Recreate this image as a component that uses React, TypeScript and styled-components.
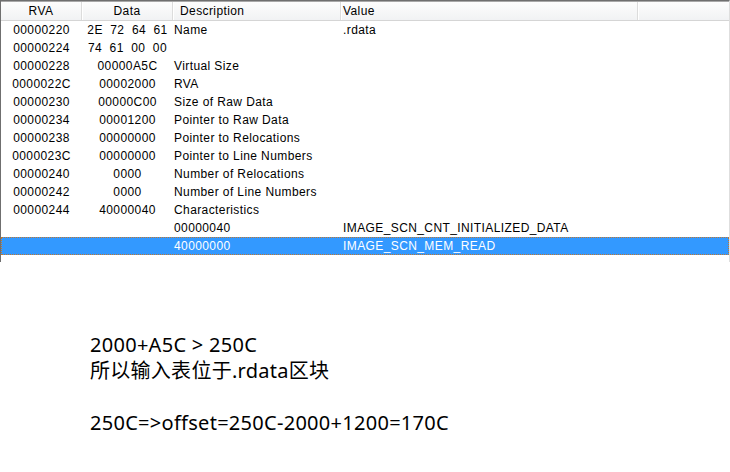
import React from "react";
import styled, { createGlobalStyle } from "styled-components";

const Global = createGlobalStyle`
  html, body { margin: 0; padding: 0; background: #ffffff; }
  body { width: 730px; height: 472px; overflow: hidden; }
`;

const COLS = "81px 91px 168px 297px 1fr";

const Page = styled.div`
  display: flex;
  flex-direction: column;
  width: 730px;
  height: 472px;
  background: #ffffff;
`;

const ListView = styled.div`
  height: 262px;
  box-sizing: border-box;
  border-top: 1px solid #6f6f6f;
  border-left: 1px solid #6f6f6f;
  border-right: 1px solid #dedede;
  display: flex;
  flex-direction: column;
  font-family: "Liberation Sans", Arial, sans-serif;
  font-size: 12px;
  letter-spacing: 0.4px;
  color: #000;
`;

const Header = styled.div`
  display: grid;
  grid-template-columns: ${COLS};
  height: 18px;
  background: linear-gradient(#fdfdfd, #f1f2f4);
  border-top: 1px solid #a8a8a8;
  border-bottom: 1px solid #d5d5d5;
`;

const HeadCell = styled.div<{ $align?: "center" | "left"; $pad?: number; $last?: boolean }>`
  display: flex;
  align-items: center;
  justify-content: ${(p) => (p.$align === "left" ? "flex-start" : "center")};
  padding-left: ${(p) => p.$pad ?? 0}px;
  border-right: ${(p) => (p.$last ? "none" : "1px solid #dcdcdc")};
  box-shadow: ${(p) => (p.$last ? "none" : "1px 0 0 #ffffff")};
  color: #000;
  white-space: nowrap;
  overflow: hidden;
`;

const Body = styled.div`
  display: flex;
  flex-direction: column;
`;

const Row = styled.div<{ $selected?: boolean }>`
  display: grid;
  grid-template-columns: ${COLS};
  height: 18px;
  background: ${(p) => (p.$selected ? "#3399ff" : "transparent")};
  color: ${(p) => (p.$selected ? "#ffffff" : "#000000")};
  outline: ${(p) => (p.$selected ? "1px dotted #c2772e" : "none")};
  outline-offset: -1px;
`;

const Cell = styled.div<{ $align?: "center" | "left"; $pad?: number }>`
  display: flex;
  align-items: center;
  justify-content: ${(p) => (p.$align === "left" ? "flex-start" : "center")};
  padding-left: ${(p) => p.$pad ?? 0}px;
  white-space: pre;
  overflow: hidden;
`;

const Notes = styled.div`
  margin-top: 70px;
  padding-left: 90px;
  font-family: "Noto Sans", "Noto Sans CJK SC", sans-serif;
  font-size: 20px;
  line-height: 26px;
  letter-spacing: 0.28px;
  color: #000;
`;

const NoteLine = styled.div`
  height: 26px;
  white-space: pre;
`;

type R = { rva: string; data: string; desc: string; value: string; selected?: boolean };

const rows: R[] = [
  { rva: "00000220", data: "2E  72  64  61", desc: "Name", value: ".rdata" },
  { rva: "00000224", data: "74  61  00  00", desc: "", value: "" },
  { rva: "00000228", data: "00000A5C", desc: "Virtual Size", value: "" },
  { rva: "0000022C", data: "00002000", desc: "RVA", value: "" },
  { rva: "00000230", data: "00000C00", desc: "Size of Raw Data", value: "" },
  { rva: "00000234", data: "00001200", desc: "Pointer to Raw Data", value: "" },
  { rva: "00000238", data: "00000000", desc: "Pointer to Relocations", value: "" },
  { rva: "0000023C", data: "00000000", desc: "Pointer to Line Numbers", value: "" },
  { rva: "00000240", data: "0000", desc: "Number of Relocations", value: "" },
  { rva: "00000242", data: "0000", desc: "Number of Line Numbers", value: "" },
  { rva: "00000244", data: "40000040", desc: "Characteristics", value: "" },
  { rva: "", data: "", desc: "00000040", value: "IMAGE_SCN_CNT_INITIALIZED_DATA" },
  { rva: "", data: "", desc: "40000000", value: "IMAGE_SCN_MEM_READ", selected: true },
];

export default function App() {
  return (
    <Page>
      <Global />
      <ListView>
        <Header>
          <HeadCell>RVA</HeadCell>
          <HeadCell>Data</HeadCell>
          <HeadCell $align="left" $pad={7}>Description</HeadCell>
          <HeadCell $align="left" $pad={2}>Value</HeadCell>
          <HeadCell $last />
        </Header>
        <Body>
          {rows.map((r, i) => (
            <Row key={i} $selected={r.selected}>
              <Cell>{r.rva}</Cell>
              <Cell>{r.data}</Cell>
              <Cell $align="left" $pad={1}>{r.desc}</Cell>
              <Cell $align="left" $pad={2}>{r.value}</Cell>
              <Cell />
            </Row>
          ))}
        </Body>
      </ListView>
      <Notes>
        <NoteLine>2000+A5C &gt; 250C</NoteLine>
        <NoteLine>所以输入表位于.rdata区块</NoteLine>
        <NoteLine> </NoteLine>
        <NoteLine>250C=&gt;offset=250C-2000+1200=170C</NoteLine>
      </Notes>
    </Page>
  );
}
